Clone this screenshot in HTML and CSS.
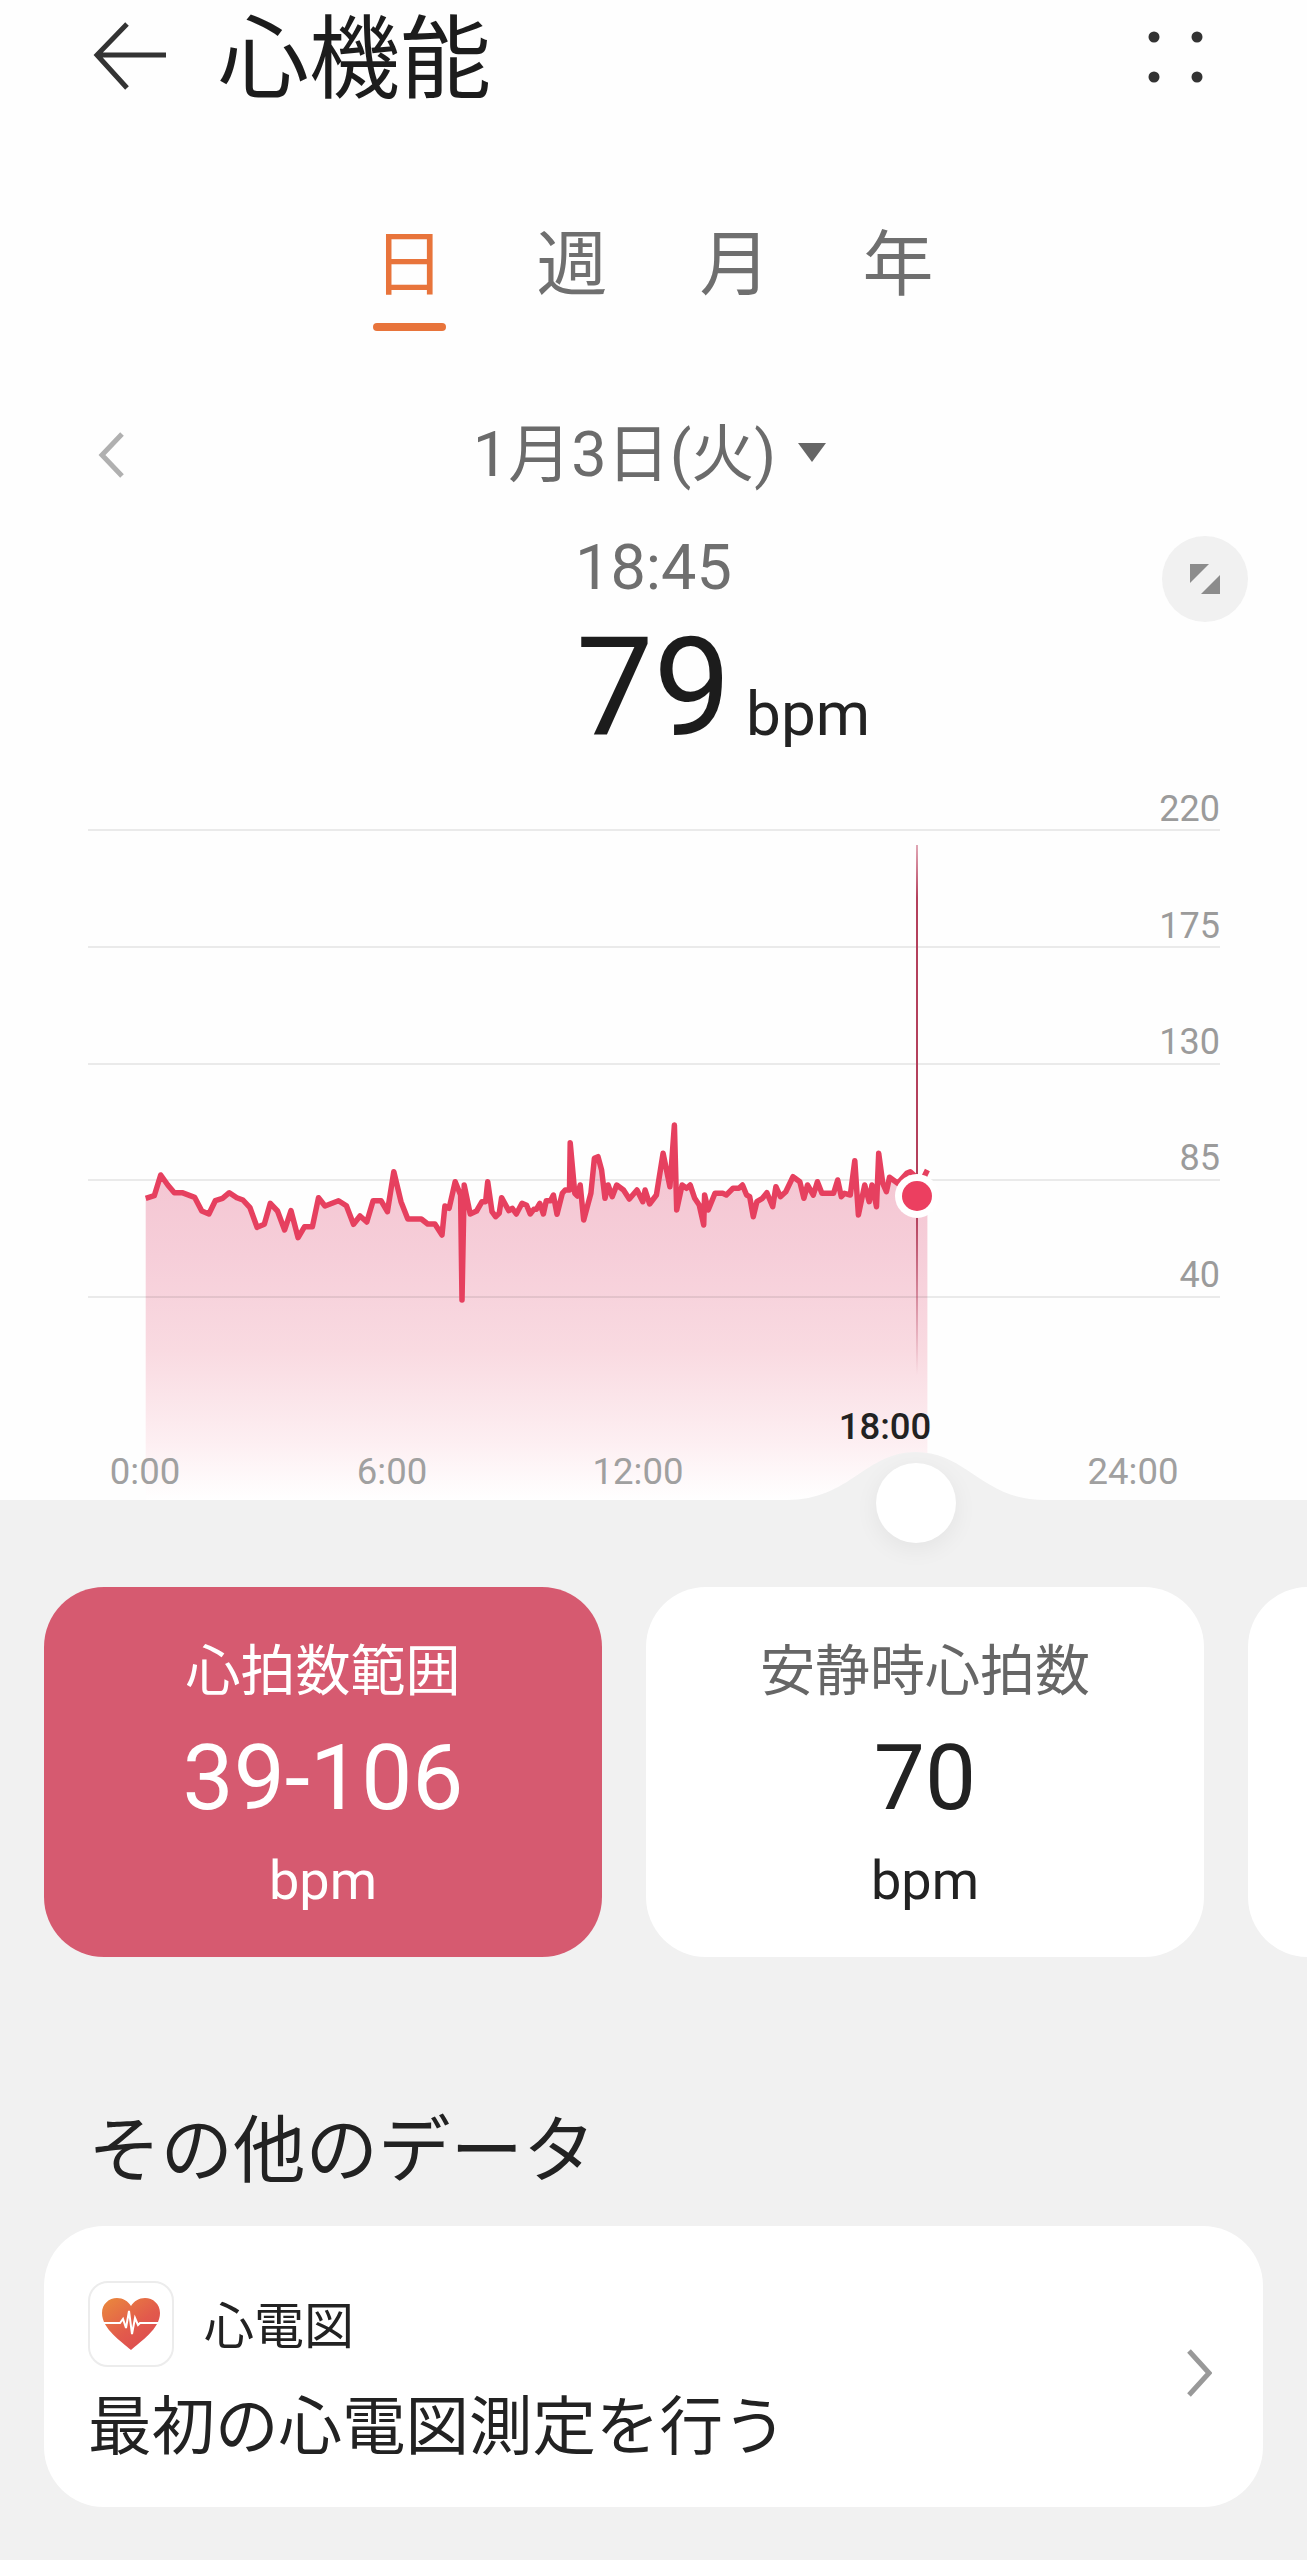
FILE: index.html
```html
<!DOCTYPE html>
<html lang="ja">
<head>
    <meta charset="UTF-8">
    <title>心機能</title>
    <link rel="stylesheet" href="styles.css">
</head>
<body>

    <div class="top">
        <div class="header">
            <div class="header-left">
                <svg class="back" viewBox="0 0 75 70"><path d="M73 33H4M34 2L4 33L34 66"/></svg>
                <h1>心機能</h1>
            </div>
            <svg class="more" viewBox="0 0 60 60">
                <circle cx="9" cy="10" r="5.5"/><circle cx="52" cy="10" r="5.5"/>
                <circle cx="9" cy="50" r="5.5"/><circle cx="52" cy="50" r="5.5"/>
            </svg>
        </div>

        <div class="tabs">
            <div class="tab active">日</div>
            <div class="tab">週</div>
            <div class="tab">月</div>
            <div class="tab">年</div>
        </div>

        <div class="date-row">
            <svg class="prev" viewBox="0 0 26 46"><path d="M24 2L4 23L24 44"/></svg>
            <div class="date">1月3日(火)<span class="caret"></span></div>
            <div></div>
        </div>

        <div class="reading">
            <div class="time">18:45</div>
            <div class="value-row">
                <div></div>
                <div class="value">79</div>
                <div class="unit">bpm</div>
            </div>
            <div class="expand">
                <svg viewBox="0 0 34 34">
                    <path d="M2 2H21L2 21Z"/>
                    <path d="M32 13V32H13Z"/>
                </svg>
            </div>
        </div>

        <div class="chart">
            <svg class="chart-svg" viewBox="0 800 1307 700">
                <defs>
                    <linearGradient id="area" x1="0" y1="1125" x2="0" y2="1500" gradientUnits="userSpaceOnUse">
                        <stop offset="0" stop-color="#f3c2cf"/>
                        <stop offset="0.35" stop-color="#f6ced9"/>
                        <stop offset="0.6" stop-color="#f9dae1"/>
                        <stop offset="0.85" stop-color="#fdeff2"/>
                        <stop offset="1" stop-color="#ffffff"/>
                    </linearGradient>
                    <linearGradient id="cursor" x1="0" y1="845" x2="0" y2="1375" gradientUnits="userSpaceOnUse">
                        <stop offset="0" stop-color="#c2506c" stop-opacity="0.5"/>
                        <stop offset="0.1" stop-color="#b4405c"/>
                        <stop offset="0.7" stop-color="#b4405c"/>
                        <stop offset="1" stop-color="#b4405c" stop-opacity="0"/>
                    </linearGradient>
                </defs>

                <path class="area" d="M145.7 1198.3L154.3 1195.7 160.7 1175 167.8 1185 174.3 1192.7 182.1 1192.7 194.6 1197.3 201.8 1211 208.9 1214 215.3 1200.7 222.5 1198.3 229.3 1192.7 236.8 1197.7 242.9 1200 250 1207.7 257.1 1227.3 264.3 1224.3 270.3 1203.3 277.5 1211 284.6 1230 291 1210.7 298.1 1237.7 304.6 1226.7 312.4 1226.7 318.5 1197.7 325 1206 338.5 1200.7 346.4 1205.7 353.5 1224.3 360 1216 366.8 1222 373.1 1200.7 381 1200.7 387.4 1211.7 393.8 1171.7 401 1201.7 407.8 1219 421.3 1219 427.7 1224 434.9 1224 442 1235 444.9 1206 449.1 1208.3 455.2 1181.7 460.6 1195 462 1300 464.2 1185 470.2 1214 476.6 1211 482 1201.7 485.6 1201.7 487.7 1181.7 492 1211.7 495.6 1216.7 499.2 1213.3 501.6 1197.7 508.8 1210.7 512.3 1208.3 516.3 1214 522 1203.3 526.6 1205.3 530.2 1214 533.8 1209.3 536.3 1209.3 539.8 1203.3 543.4 1214 546.3 1200.7 550.5 1200.7 553.4 1195 557 1214.3 562.3 1193.3 565.2 1190 569.5 1190 570.2 1142.7 574.8 1193.3 577.3 1196 580.2 1185 583.7 1220 590.9 1193.3 594.4 1158.3 598 1156.7 601.6 1170 605 1198.3 608.1 1185 612.2 1196.7 616.7 1185 623.5 1190 629.3 1199 637 1190 642.8 1201.7 645.1 1190 649.6 1204 656.4 1195 663.1 1153.3 669.9 1186.7 674.4 1125 676.7 1210 682.1 1185 686.6 1188.3 690.2 1185 694.7 1198.3 699.2 1205 703.7 1225 704.6 1195 708.2 1210 715 1193.3 722.7 1193.3 726.3 1195 733 1188.3 738.9 1188.3 742.5 1185 746.6 1195 749.7 1196.7 753.3 1216.7 756.9 1201.7 762.4 1198.3 766.9 1192.7 772.7 1206.7 775.9 1186.7 780.4 1196.7 785.8 1191.7 793 1176.7 799.8 1181.7 803.9 1198.3 807.5 1185 813.3 1195 817.4 1181.7 821.9 1193.3 833.6 1193.3 837.7 1180 841.3 1196.7 844.4 1193.3 850.3 1195 854.8 1160.7 858.4 1215 864.7 1185 869.2 1201.7 872 1185 876.5 1206.7 878.7 1153.3 882.8 1183.3 886.4 1191.7 889.5 1177.3 897.7 1183.3 906.7 1173.3 910.3 1171.7 915.7 1176.7 922.5 1180 927.4 1170V1500H145.7Z"/>

                <path class="grid" d="M88 830H1220M88 947H1220M88 1064H1220M88 1180H1220M88 1297H1220"/>
                <text class="y-label" x="1220" y="821">220</text>
                <text class="y-label" x="1220" y="938">175</text>
                <text class="y-label" x="1220" y="1054">130</text>
                <text class="y-label" x="1220" y="1170">85</text>
                <text class="y-label" x="1220" y="1287">40</text>

                <rect class="cursor" x="916" y="845" width="2" height="530"/>

                <path class="line" d="M145.7 1198.3L154.3 1195.7 160.7 1175 167.8 1185 174.3 1192.7 182.1 1192.7 194.6 1197.3 201.8 1211 208.9 1214 215.3 1200.7 222.5 1198.3 229.3 1192.7 236.8 1197.7 242.9 1200 250 1207.7 257.1 1227.3 264.3 1224.3 270.3 1203.3 277.5 1211 284.6 1230 291 1210.7 298.1 1237.7 304.6 1226.7 312.4 1226.7 318.5 1197.7 325 1206 338.5 1200.7 346.4 1205.7 353.5 1224.3 360 1216 366.8 1222 373.1 1200.7 381 1200.7 387.4 1211.7 393.8 1171.7 401 1201.7 407.8 1219 421.3 1219 427.7 1224 434.9 1224 442 1235 444.9 1206 449.1 1208.3 455.2 1181.7 460.6 1195 462 1300 464.2 1185 470.2 1214 476.6 1211 482 1201.7 485.6 1201.7 487.7 1181.7 492 1211.7 495.6 1216.7 499.2 1213.3 501.6 1197.7 508.8 1210.7 512.3 1208.3 516.3 1214 522 1203.3 526.6 1205.3 530.2 1214 533.8 1209.3 536.3 1209.3 539.8 1203.3 543.4 1214 546.3 1200.7 550.5 1200.7 553.4 1195 557 1214.3 562.3 1193.3 565.2 1190 569.5 1190 570.2 1142.7 574.8 1193.3 577.3 1196 580.2 1185 583.7 1220 590.9 1193.3 594.4 1158.3 598 1156.7 601.6 1170 605 1198.3 608.1 1185 612.2 1196.7 616.7 1185 623.5 1190 629.3 1199 637 1190 642.8 1201.7 645.1 1190 649.6 1204 656.4 1195 663.1 1153.3 669.9 1186.7 674.4 1125 676.7 1210 682.1 1185 686.6 1188.3 690.2 1185 694.7 1198.3 699.2 1205 703.7 1225 704.6 1195 708.2 1210 715 1193.3 722.7 1193.3 726.3 1195 733 1188.3 738.9 1188.3 742.5 1185 746.6 1195 749.7 1196.7 753.3 1216.7 756.9 1201.7 762.4 1198.3 766.9 1192.7 772.7 1206.7 775.9 1186.7 780.4 1196.7 785.8 1191.7 793 1176.7 799.8 1181.7 803.9 1198.3 807.5 1185 813.3 1195 817.4 1181.7 821.9 1193.3 833.6 1193.3 837.7 1180 841.3 1196.7 844.4 1193.3 850.3 1195 854.8 1160.7 858.4 1215 864.7 1185 869.2 1201.7 872 1185 876.5 1206.7 878.7 1153.3 882.8 1183.3 886.4 1191.7 889.5 1177.3 897.7 1183.3 906.7 1173.3 910.3 1171.7 915.7 1176.7 922.5 1180 927.4 1170"/>

                <circle class="dot-ring" cx="917" cy="1196" r="22"/>
                <circle class="dot" cx="917" cy="1196" r="15"/>

                <path class="bump" d="M787 1500C850 1500 865 1452 916 1452C967 1452 982 1500 1045 1500Z"/>

                <text class="x-label" x="145" y="1484">0:00</text>
                <text class="x-label" x="392" y="1484">6:00</text>
                <text class="x-label" x="638" y="1484">12:00</text>
                <text class="x-label current" x="885" y="1439">18:00</text>
                <text class="x-label" x="1133" y="1484">24:00</text>
            </svg>
            <div class="handle"></div>
        </div>
    </div>

    <div class="bottom">
        <div class="cards">
            <div class="card selected">
                <div class="card-label">心拍数範囲</div>
                <div class="card-value">39-106</div>
                <div class="card-unit">bpm</div>
            </div>
            <div class="card">
                <div class="card-label">安静時心拍数</div>
                <div class="card-value">70</div>
                <div class="card-unit">bpm</div>
            </div>
            <div class="card"></div>
        </div>

        <h2>その他のデータ</h2>

        <div class="ecg-card">
            <div class="ecg-body">
                <div class="ecg-head">
                    <div class="ecg-icon">
                        <svg viewBox="0 0 58 52">
                            <defs>
                                <linearGradient id="heart" x1="0" y1="0" x2="0.8" y2="1">
                                    <stop offset="0" stop-color="#ea8a3c"/>
                                    <stop offset="0.6" stop-color="#e25a4c"/>
                                    <stop offset="1" stop-color="#dc4a50"/>
                                </linearGradient>
                            </defs>
                            <path fill="url(#heart)" d="M29 52C20 44 0 31 0 15C0 6 7 0 15 0C21 0 26 3 29 8C32 3 37 0 43 0C51 0 58 6 58 15C58 31 38 44 29 52Z"/>
                            <path class="ecg-trace" d="M1 25H18L21 21 24 30 27 13 30 36 33 20 36 27 38 25H57"/>
                        </svg>
                    </div>
                    <div class="ecg-title">心電図</div>
                </div>
                <div class="ecg-text">最初の心電図測定を行う</div>
            </div>
            <svg class="next" viewBox="0 0 26 48"><path d="M3 2L23 24L3 46"/></svg>
        </div>
    </div>

</body>
</html>
```

FILE: styles.css
```css
* {
    box-sizing: border-box;
}
html, body {
    margin: 0;
    padding: 0;
}
body {
    width: 1307px;
    height: 2560px;
    overflow: hidden;
    background: #f1f1f1;
    font-family: Roboto, "Noto Sans CJK JP", sans-serif;
    color: #222;
}

/* top white part */
.top {
    height: 1500px;
    background: #fefefe;
}
.header {
    height: 114px;
    padding: 0 102px 0 93px;
    display: flex;
    align-items: center;
    justify-content: space-between;
}
.header-left {
    display: flex;
    align-items: center;
    gap: 50px;
}
.back {
    width: 75px;
    height: 70px;
    fill: none;
    stroke: #333;
    stroke-width: 5;
}
h1 {
    margin: 0;
    padding-top: 6px;
    font-size: 91px;
    line-height: 114px;
    font-weight: 400;
    color: #1c1c1c;
}
.more {
    width: 60px;
    height: 60px;
    fill: #333;
}

.tabs {
    padding-top: 111px;
    display: flex;
    justify-content: center;
}
.tab {
    width: 163px;
    height: 106px;
    font-size: 71px;
    line-height: 80px;
    text-align: center;
    color: #6f6f6f;
}
.tab.active {
    color: #e8743b;
}
.tab.active::after {
    content: "";
    display: block;
    width: 73px;
    height: 8px;
    margin: 18px auto 0;
    border-radius: 4px;
    background: #e8743b;
}

.date-row {
    margin-top: 84px;
    height: 80px;
    padding: 0 98px;
    display: grid;
    grid-template-columns: 1fr auto 1fr;
    align-items: center;
}
.prev {
    width: 26px;
    height: 46px;
    fill: none;
    stroke: #b0b0b0;
    stroke-width: 5;
}
.date {
    display: flex;
    align-items: center;
    padding-right: 8px;
    font-size: 63px;
    line-height: 80px;
    color: #6b6b6b;
}
.caret {
    width: 0;
    height: 0;
    margin-left: 22px;
    margin-top: -6px;
    border-left: 14px solid transparent;
    border-right: 14px solid transparent;
    border-top: 19px solid #666;
}

.reading {
    position: relative;
    margin-top: 38px;
}
.time {
    height: 70px;
    font-size: 63px;
    line-height: 70px;
    text-align: center;
    color: #6f6f6f;
}
.value-row {
    margin-top: 15px;
    height: 140px;
    display: grid;
    grid-template-columns: 1fr auto 1fr;
    align-items: baseline;
}
.value {
    font-size: 138px;
    line-height: 140px;
    color: #1c1c1c;
}
.unit {
    padding-left: 15px;
    font-size: 62px;
    color: #222;
}
.expand {
    position: absolute;
    top: 3px;
    right: 59px;
    width: 86px;
    height: 86px;
    border-radius: 50%;
    background: #f1f1f1;
    display: flex;
    align-items: center;
    justify-content: center;
}
.expand svg {
    width: 34px;
    height: 34px;
    fill: #8c8c8c;
}

/* chart */
.chart {
    position: relative;
    margin-top: 42px;
    height: 700px;
}
.chart-svg {
    display: block;
    width: 1307px;
    height: 700px;
    overflow: visible;
}
.area {
    fill: url(#area);
}
.grid {
    fill: none;
    stroke: #000;
    stroke-opacity: 0.08;
    stroke-width: 2;
}
.line {
    fill: none;
    stroke: #e6405f;
    stroke-width: 5.5;
    stroke-linejoin: round;
}
.cursor {
    fill: url(#cursor);
}
.dot-ring {
    fill: #fff;
}
.dot {
    fill: #ec3f60;
}
.bump {
    fill: #f1f1f1;
}
.y-label {
    font-size: 36px;
    fill: #9b9b9b;
    text-anchor: end;
}
.x-label {
    font-size: 36.5px;
    fill: #a0a0a0;
    text-anchor: middle;
}
.x-label.current {
    fill: #222;
    font-weight: 500;
}
.handle {
    position: absolute;
    left: 876px;
    bottom: -43px;
    width: 80px;
    height: 80px;
    border-radius: 50%;
    background: #fff;
    box-shadow: 0 6px 24px rgba(0, 0, 0, 0.06);
}

/* gray part */
.bottom {
    padding-top: 87px;
}
.cards {
    padding-left: 44px;
    display: flex;
    gap: 44px;
    overflow: hidden;
}
.card {
    flex: 0 0 558px;
    height: 370px;
    padding-top: 49px;
    border-radius: 60px;
    background: #fff;
    text-align: center;
}
.card.selected {
    background: #d65a70;
    color: #fff;
}
.card-label {
    height: 70px;
    font-size: 55px;
    line-height: 70px;
    color: #666;
}
.card.selected .card-label {
    color: #fff;
}
.card-value {
    margin-top: 17px;
    height: 110px;
    font-size: 91px;
    line-height: 110px;
}
.card-unit {
    margin-top: 13px;
    height: 70px;
    font-size: 54px;
    line-height: 70px;
}

h2 {
    margin: 150px 0 0 88px;
    font-size: 72.5px;
    line-height: 90px;
    font-weight: 400;
    color: #222;
}

.ecg-card {
    margin: 29px 44px 0;
    height: 281px;
    padding: 55px 51px 0 44px;
    border-radius: 60px;
    background: #fff;
    display: flex;
    justify-content: space-between;
}
.ecg-head {
    display: flex;
    align-items: center;
    gap: 30px;
}
.ecg-icon {
    width: 86px;
    height: 86px;
    border: 2px solid #ececec;
    border-radius: 20px;
    display: flex;
    align-items: center;
    justify-content: center;
}
.ecg-icon svg {
    width: 58px;
    height: 52px;
}
.ecg-trace {
    fill: none;
    stroke: #fff;
    stroke-width: 2;
}
.ecg-title {
    padding-top: 6px;
    font-size: 50px;
    line-height: 60px;
    color: #222;
}
.ecg-text {
    margin-top: 21px;
    font-size: 63.5px;
    line-height: 80px;
    color: #222;
    white-space: nowrap;
}
.next {
    width: 26px;
    height: 48px;
    margin-top: 68px;
    fill: none;
    stroke: #999;
    stroke-width: 5;
}
```
